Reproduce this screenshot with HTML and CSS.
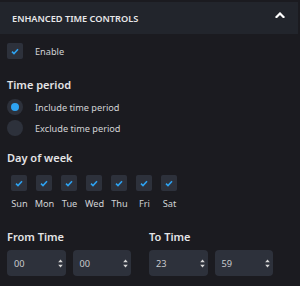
FILE: index.html
```html
<!DOCTYPE html>
<html lang="en">
<head>
  <meta charset="UTF-8">
  <title>Enhanced Time Controls</title>
  <link rel="stylesheet" href="styles.css">
</head>
<body>
  <div class="panel">
    <div class="panel-header">
      <span class="panel-title">Enhanced Time Controls</span>
      <svg class="chevron" width="10" height="6" viewBox="0 0 10 6">
        <polyline points="1.5,5 5,1.5 8.5,5" fill="none" stroke="#fff" stroke-width="2.2" stroke-linecap="square"/>
      </svg>
    </div>

    <div class="panel-body">
      <label class="check-row">
        <span class="box">
          <svg width="8" height="7" viewBox="0 0 8 7"><polyline points="1,3.6 3,5.5 7,1.3" fill="none" stroke="#2ea3f2" stroke-width="1.6"/></svg>
        </span>
        <span>Enable</span>
      </label>

      <h3 class="section-title first">Time period</h3>
      <div class="radio-row">
        <span class="radio on"></span>
        <span>Include time period</span>
      </div>
      <div class="radio-row">
        <span class="radio"></span>
        <span>Exclude time period</span>
      </div>

      <h3 class="section-title">Day of week</h3>
      <div class="days">
        <div class="day"><span class="box"><svg width="8" height="7" viewBox="0 0 8 7"><polyline points="1,3.6 3,5.5 7,1.3" fill="none" stroke="#2ea3f2" stroke-width="1.6"/></svg></span><span>Sun</span></div>
        <div class="day"><span class="box"><svg width="8" height="7" viewBox="0 0 8 7"><polyline points="1,3.6 3,5.5 7,1.3" fill="none" stroke="#2ea3f2" stroke-width="1.6"/></svg></span><span>Mon</span></div>
        <div class="day"><span class="box"><svg width="8" height="7" viewBox="0 0 8 7"><polyline points="1,3.6 3,5.5 7,1.3" fill="none" stroke="#2ea3f2" stroke-width="1.6"/></svg></span><span>Tue</span></div>
        <div class="day"><span class="box"><svg width="8" height="7" viewBox="0 0 8 7"><polyline points="1,3.6 3,5.5 7,1.3" fill="none" stroke="#2ea3f2" stroke-width="1.6"/></svg></span><span>Wed</span></div>
        <div class="day"><span class="box"><svg width="8" height="7" viewBox="0 0 8 7"><polyline points="1,3.6 3,5.5 7,1.3" fill="none" stroke="#2ea3f2" stroke-width="1.6"/></svg></span><span>Thu</span></div>
        <div class="day"><span class="box"><svg width="8" height="7" viewBox="0 0 8 7"><polyline points="1,3.6 3,5.5 7,1.3" fill="none" stroke="#2ea3f2" stroke-width="1.6"/></svg></span><span>Fri</span></div>
        <div class="day"><span class="box"><svg width="8" height="7" viewBox="0 0 8 7"><polyline points="1,3.6 3,5.5 7,1.3" fill="none" stroke="#2ea3f2" stroke-width="1.6"/></svg></span><span>Sat</span></div>
      </div>

      <div class="times">
        <div class="time-group">
          <h3 class="section-title">From Time</h3>
          <div class="selects">
            <div class="select"><span>00</span><svg width="5" height="9" viewBox="0 0 5 9"><path d="M2.5 0.5 L4.8 3.3 H0.2 Z M2.5 8.5 L4.8 5.7 H0.2 Z" fill="#d6d6d6"/></svg></div>
            <div class="select"><span>00</span><svg width="5" height="9" viewBox="0 0 5 9"><path d="M2.5 0.5 L4.8 3.3 H0.2 Z M2.5 8.5 L4.8 5.7 H0.2 Z" fill="#d6d6d6"/></svg></div>
          </div>
        </div>
        <div class="time-group">
          <h3 class="section-title">To Time</h3>
          <div class="selects">
            <div class="select"><span>23</span><svg width="5" height="9" viewBox="0 0 5 9"><path d="M2.5 0.5 L4.8 3.3 H0.2 Z M2.5 8.5 L4.8 5.7 H0.2 Z" fill="#d6d6d6"/></svg></div>
            <div class="select"><span>59</span><svg width="5" height="9" viewBox="0 0 5 9"><path d="M2.5 0.5 L4.8 3.3 H0.2 Z M2.5 8.5 L4.8 5.7 H0.2 Z" fill="#d6d6d6"/></svg></div>
          </div>
        </div>
      </div>
    </div>
  </div>
</body>
</html>
```

FILE: styles.css
```css
body {
  margin: 0;
  background-color: #1b1b20;
  font-family: "Noto Sans", "Open Sans", sans-serif;
  font-size: 9.2px;
  color: #d2d3d6;
}
.panel {
  width: 298px;
  padding-top: 2px;
}
.panel-header {
  height: 32px;
  background-color: #22252c;
  padding: 0 12px;
  display: flex;
  justify-content: space-between;
  align-items: center;
}
.panel-title {
  text-transform: uppercase;
  font-size: 9.2px;
  font-weight: 600;
  color: #e8e8ea;
}
.chevron {
  align-self: flex-start;
  margin-top: 10px;
  margin-right: 1px;
}
.panel-body {
  padding-left: 7px;
}
.check-row {
  display: flex;
  align-items: center;
  gap: 12px;
  margin-top: 9px;
  height: 16px;
}
.box {
  width: 16px;
  height: 16px;
  border-radius: 2px;
  background-color: #2d313b;
  display: flex;
  align-items: center;
  justify-content: center;
}
.section-title {
  margin: 18px 0 0;
  font-size: 11px;
  line-height: 16px;
  font-weight: 600;
  color: #e4e4e6;
}
.radio-row {
  display: flex;
  align-items: center;
  gap: 12px;
  height: 16px;
  margin-top: 5px;
}
.section-title.first + .radio-row {
  margin-top: 6px;
}
.radio {
  width: 16px;
  height: 16px;
  border-radius: 50%;
  background-color: #2d313b;
  display: flex;
  align-items: center;
  justify-content: center;
}
.radio.on::after {
  content: "";
  width: 8px;
  height: 8px;
  border-radius: 50%;
  background-color: #2ea3f2;
}
.section-title + .radio-row + .radio-row + .section-title {
  margin-top: 14px;
}
.days {
  display: grid;
  grid-template-columns: repeat(7, 25px);
  margin-top: 9px;
}
.day {
  display: flex;
  flex-direction: column;
  align-items: center;
  gap: 6px;
  line-height: 14px;
}
.day .box {
  margin-left: -1px;
}
.times {
  display: flex;
  gap: 18px;
}
.time-group {
  width: 124px;
}
.selects {
  display: flex;
  gap: 7px;
  margin-top: 5px;
}
.select {
  flex: 1;
  height: 26px;
  border-radius: 4px;
  background-color: #2d313b;
  padding: 0 3px 0 7px;
  display: flex;
  align-items: center;
  justify-content: space-between;
  color: #c8c9cc;
}
```
